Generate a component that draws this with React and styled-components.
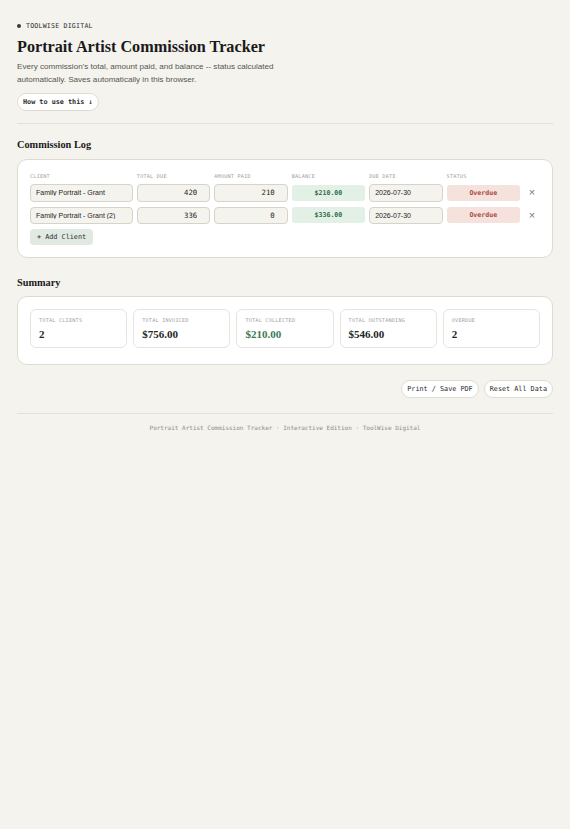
import React, { useState } from "react";
import styled, { createGlobalStyle } from "styled-components";

const GlobalStyle = createGlobalStyle`
  * { box-sizing: border-box; }
  body {
    margin: 0;
    background: #f4f3ee;
    color: #1d1f1c;
    font-family: "Liberation Sans", Arial, sans-serif;
  }
`;

const mono = `"DejaVu Sans Mono", "Liberation Mono", monospace`;
const serif = `"Liberation Serif", "Times New Roman", serif`;

const Page = styled.div`
  padding: 21px 17px 40px;
`;

const Brand = styled.div`
  display: flex;
  align-items: center;
  gap: 5px;
  font-family: ${mono};
  font-size: 6.6px;
  letter-spacing: 0.2px;
  color: #2b2f2b;
  height: 10px;
`;

const Dot = styled.span`
  width: 4px;
  height: 4px;
  border-radius: 50%;
  background: #2f4035;
`;

const Title = styled.h1`
  font-family: ${serif};
  font-size: 16.2px;
  font-weight: 700;
  margin: 6px 0 0;
  line-height: 20px;
  color: #1a1a1a;
`;

const Lead = styled.p`
  font-size: 8.1px;
  line-height: 12.5px;
  color: #555650;
  margin: 4px 0 0;
  max-width: 270px;
`;

const PillButton = styled.button`
  font-family: ${mono};
  font-size: 6.8px;
  font-weight: ${(p) => (p.$bold ? 700 : 400)};
  color: #2a2c29;
  background: #fff;
  border: 1px solid #dedcd4;
  border-radius: 10px;
  height: 18px;
  padding: 0 5px;
  cursor: pointer;
`;

const HowTo = styled(PillButton)`
  margin-top: 7px;
`;

const Rule = styled.hr`
  border: 0;
  border-top: 1px solid #e2e0d8;
  margin: ${(p) => p.$m || "12px 0 0"};
`;

const SectionTitle = styled.h2`
  font-family: ${serif};
  font-size: 10.3px;
  font-weight: 700;
  margin: ${(p) => p.$m || "14px 0 7px"};
  line-height: 14px;
  color: #1a1a1a;
`;

const Card = styled.div`
  background: #fff;
  border: 1.5px solid #dedbcf;
  border-radius: 10px;
  padding: ${(p) => p.$pad || "12px 12px 12px"};
`;

const Grid = styled.div`
  display: grid;
  grid-template-columns: 1.4fr repeat(5, 1fr) 16px;
  column-gap: 4px;
  align-items: center;
`;

const HeadRow = styled(Grid)`
  margin-bottom: 3px;
`;

const Row = styled(Grid)`
  margin-bottom: 5px;
`;

const ColHead = styled.div`
  font-family: ${mono};
  font-size: 5.2px;
  color: #a3a39d;
  letter-spacing: 0.2px;
  height: 9px;
  line-height: 9px;
`;

const Field = styled.input`
  width: 100%;
  height: 17.5px;
  background: #f4f3ee;
  border: 1px solid #d6d3c9;
  border-radius: 4px;
  padding: 0 5px;
  font-family: ${(p) => (p.$num ? mono : `"Liberation Sans", Arial, sans-serif`)};
  font-size: ${(p) => (p.$num ? "7.3px" : "7px")};
  text-align: ${(p) => (p.$num ? "right" : "left")};
  padding-right: ${(p) => (p.$num ? "12px" : "5px")};
  color: #1e1e1c;
  outline: none;
`;

const Badge = styled.div`
  height: 16px;
  border-radius: 3px;
  display: flex;
  align-items: center;
  justify-content: center;
  font-family: ${mono};
  font-size: 6.6px;
  font-weight: 700;
  background: ${(p) => (p.$tone === "bad" ? "#f6e2dd" : "#e2f0e6")};
  color: ${(p) => (p.$tone === "bad" ? "#a84a44" : "#2f6b48")};
`;

const Remove = styled.button`
  border: 0;
  background: none;
  color: #7a7a76;
  font-size: 11px;
  padding: 0;
  cursor: pointer;
  line-height: 1;
  justify-self: center;
`;

const AddButton = styled.button`
  display: block;
  margin-top: 1px;
  height: 16px;
  padding: 0 7px;
  border: 0;
  border-radius: 4px;
  background: #e1e9e3;
  color: #2a302b;
  font-family: ${mono};
  font-size: 6.8px;
  cursor: pointer;
`;

const Stats = styled.div`
  display: grid;
  grid-template-columns: repeat(5, 1fr);
  gap: 6px;
`;

const Stat = styled.div`
  border: 1px solid #e6e4dd;
  border-radius: 6px;
  height: 39px;
  padding: 6px 8px 0;
`;

const StatLabel = styled.div`
  font-family: ${mono};
  font-size: 5.2px;
  color: #a3a39d;
  letter-spacing: 0.2px;
  line-height: 8px;
`;

const StatValue = styled.div`
  font-family: ${serif};
  font-size: 11px;
  font-weight: 700;
  margin-top: 3px;
  line-height: 14px;
  color: ${(p) => (p.$green ? "#3d7a52" : "#232623")};
`;

const Actions = styled.div`
  display: flex;
  justify-content: flex-end;
  gap: 5px;
  margin-top: 15px;
`;

const Footer = styled.div`
  text-align: center;
  font-family: ${mono};
  font-size: 6px;
  color: #8d8d88;
  margin-top: 10px;
`;

const fmt = (n) => `$${n.toFixed(2)}`;

export default function App() {
  const [rows, setRows] = useState([
    { id: 1, client: "Family Portrait - Grant", total: 420, paid: 210, due: "2026-07-30" },
    { id: 2, client: "Family Portrait - Grant (2)", total: 336, paid: 0, due: "2026-07-30" },
  ]);

  const update = (id, key, value) =>
    setRows((rs) => rs.map((r) => (r.id === id ? { ...r, [key]: value } : r)));

  const invoiced = rows.reduce((s, r) => s + Number(r.total || 0), 0);
  const collected = rows.reduce((s, r) => s + Number(r.paid || 0), 0);
  const overdue = rows.filter((r) => Number(r.total) - Number(r.paid) > 0).length;

  return (
    <Page>
      <GlobalStyle />
      <Brand>
        <Dot />
        TOOLWISE DIGITAL
      </Brand>
      <Title>Portrait Artist Commission Tracker</Title>
      <Lead>
        Every commission's total, amount paid, and balance -- status calculated
        automatically. Saves automatically in this browser.
      </Lead>
      <HowTo $bold>How to use this ↓</HowTo>
      <Rule />

      <SectionTitle>Commission Log</SectionTitle>
      <Card>
        <HeadRow>
          <ColHead>CLIENT</ColHead>
          <ColHead>TOTAL DUE</ColHead>
          <ColHead>AMOUNT PAID</ColHead>
          <ColHead>BALANCE</ColHead>
          <ColHead>DUE DATE</ColHead>
          <ColHead>STATUS</ColHead>
          <span />
        </HeadRow>
        {rows.map((r) => (
          <Row key={r.id}>
            <Field value={r.client} onChange={(e) => update(r.id, "client", e.target.value)} />
            <Field $num value={r.total} onChange={(e) => update(r.id, "total", e.target.value)} />
            <Field $num value={r.paid} onChange={(e) => update(r.id, "paid", e.target.value)} />
            <Badge>{fmt(Number(r.total) - Number(r.paid))}</Badge>
            <Field value={r.due} onChange={(e) => update(r.id, "due", e.target.value)} />
            <Badge $tone="bad">Overdue</Badge>
            <Remove onClick={() => setRows((rs) => rs.filter((x) => x.id !== r.id))}>×</Remove>
          </Row>
        ))}
        <AddButton
          onClick={() =>
            setRows((rs) => [...rs, { id: Date.now(), client: "", total: 0, paid: 0, due: "" }])
          }
        >
          + Add Client
        </AddButton>
      </Card>

      <SectionTitle $m="18px 0 6px">Summary</SectionTitle>
      <Card $pad="12px 12px 16px">
        <Stats>
          <Stat>
            <StatLabel>TOTAL CLIENTS</StatLabel>
            <StatValue>{rows.length}</StatValue>
          </Stat>
          <Stat>
            <StatLabel>TOTAL INVOICED</StatLabel>
            <StatValue>{fmt(invoiced)}</StatValue>
          </Stat>
          <Stat>
            <StatLabel>TOTAL COLLECTED</StatLabel>
            <StatValue $green>{fmt(collected)}</StatValue>
          </Stat>
          <Stat>
            <StatLabel>TOTAL OUTSTANDING</StatLabel>
            <StatValue>{fmt(invoiced - collected)}</StatValue>
          </Stat>
          <Stat>
            <StatLabel>OVERDUE</StatLabel>
            <StatValue>{overdue}</StatValue>
          </Stat>
        </Stats>
      </Card>

      <Actions>
        <PillButton>Print / Save PDF</PillButton>
        <PillButton>Reset All Data</PillButton>
      </Actions>
      <Rule $m="15px 0 0" />
      <Footer>Portrait Artist Commission Tracker · Interactive Edition · ToolWise Digital</Footer>
    </Page>
  );
}
